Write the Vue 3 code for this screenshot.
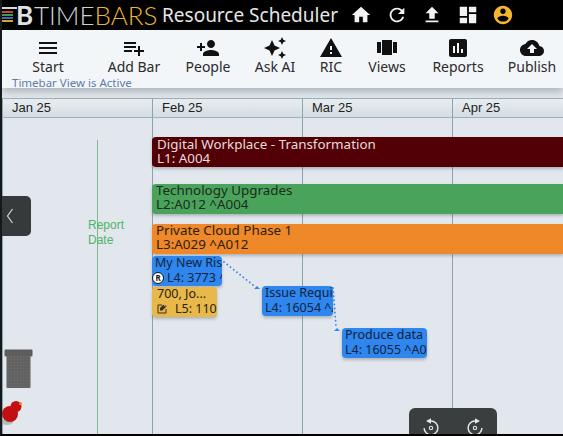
<script setup>
const icons = [
  { label: 'Start', w: 92, d: 'M3 18h18v-2H3v2zm0-5h18v-2H3v2zm0-7v2h18V6H3z' },
  { label: 'Add Bar', w: 80, d: 'M14 10H2v2h12v-2zm0-4H2v2h12V6zm4 8v-4h-2v4h-4v2h4v4h2v-4h4v-2h-4zM2 16h8v-2H2v2z' },
  { label: 'People', w: 68, d: 'M15 12c2.21 0 4-1.79 4-4s-1.79-4-4-4-4 1.79-4 4 1.79 4 4 4zm-9-2V7H4v3H1v2h3v3h2v-3h3v-2H6zm9 4c-2.67 0-8 1.34-8 4v2h16v-2c0-2.66-5.33-4-8-4z' },
  { label: 'Ask AI', w: 66, d: 'M19 9l1.25-2.75L23 5l-2.75-1.25L19 1l-1.25 2.75L15 5l2.75 1.25L19 9zm-7.5.5L9 4 6.5 9.5 1 12l5.5 2.5L9 20l2.5-5.5L17 12l-5.5-2.5zM19 15l-1.25 2.75L15 19l2.75 1.25L19 23l1.25-2.75L23 19l-2.75-1.25L19 15z' },
  { label: 'RIC', w: 46, d: 'M1 21h22L12 2 1 21zm12-3h-2v-2h2v2zm0-4h-2v-4h2v4z' },
  { label: 'Views', w: 66, d: 'M7 19h10V4H7v15zm-5-2h4V6H2v11zM18 6v11h4V6h-4z' },
  { label: 'Reports', w: 76, d: 'M19 3H5c-1.1 0-2 .9-2 2v14c0 1.1.9 2 2 2h14c1.1 0 2-.9 2-2V5c0-1.1-.9-2-2-2zM9 17H7v-7h2v7zm4 0h-2V7h2v10zm4 0h-2v-4h2v4z' },
  { label: 'Publish', w: 72, d: 'M19.35 10.04C18.67 6.59 15.64 4 12 4 9.11 4 6.6 5.64 5.35 8.04 2.34 8.36 0 10.91 0 14c0 3.31 2.69 6 6 6h13c2.76 0 5-2.24 5-5 0-2.64-2.05-4.78-4.65-4.96zM14 13v4h-4v-4H7l5-5 5 5h-3z' },
]
const topIcons = [
  { d: 'M10 20v-6h4v6h5v-8h3L12 3 2 12h3v8z', c: '#f2f2f2' },
  { d: 'M17.65 6.35C16.2 4.9 14.21 4 12 4c-4.42 0-7.99 3.58-7.99 8s3.57 8 7.99 8c3.73 0 6.84-2.55 7.73-6h-2.08c-.82 2.33-3.04 4-5.65 4-3.31 0-6-2.69-6-6s2.69-6 6-6c1.66 0 3.14.69 4.22 1.78L13 11h7V4l-2.35 2.35z', c: '#f2f2f2' },
  { d: 'M9 16h6v-6h4l-7-7-7 7h4zm-4 2h14v2H5z', c: '#f2f2f2' },
  { d: 'M3 13h8V3H3v10zm0 8h8v-6H3v6zm10 0h8V11h-8v10zm0-18v6h8V3h-8z', c: '#f2f2f2' },
  { d: 'M12 2C6.48 2 2 6.48 2 12s4.48 10 10 10 10-4.48 10-10S17.52 2 12 2zm0 3c1.66 0 3 1.34 3 3s-1.34 3-3 3-3-1.34-3-3 1.34-3 3-3zm0 14.2c-2.5 0-4.71-1.28-6-3.22.03-1.99 4-3.08 6-3.08 1.99 0 5.97 1.09 6 3.08-1.29 1.94-3.5 3.22-6 3.22z', c: '#f5b52e' },
]
const months = ['Jan 25', 'Feb 25', 'Mar 25', 'Apr 25']
</script>

<template>
  <div class="app">
    <header class="top">
      <div class="logo">
        <svg class="mark" viewBox="0 0 16 17" width="16" height="17">
          <rect x="0" y="0" width="15" height="2" fill="#d5d9dc" />
          <rect x="0" y="4" width="11" height="2" fill="#c8452e" />
          <rect x="0" y="7" width="11" height="2" fill="#3f9a4a" />
          <rect x="0" y="10" width="11" height="2" fill="#2f6fc2" />
          <rect x="0" y="13" width="11" height="2" fill="#d8a02a" />
        </svg>
        <span class="tb">B</span>
        <span class="time">TIME</span><span class="bars">BARS</span>
      </div>
      <div class="title">Resource Scheduler</div>
      <div class="top-icons">
        <svg v-for="t in topIcons" :key="t.d" viewBox="0 0 24 24" width="22" height="22"><path :d="t.d" :fill="t.c" /></svg>
      </div>
    </header>

    <nav class="toolbar">
      <div class="tools">
        <div v-for="i in icons" :key="i.label" class="tool" :style="{ width: i.w + 'px' }">
          <svg viewBox="0 0 24 24" width="24" height="24"><path :d="i.d" fill="#111" /></svg>
          <span>{{ i.label }}</span>
        </div>
      </div>
      <div class="status">Timebar View is Active</div>
    </nav>

    <div class="months">
      <div v-for="m in months" :key="m" class="month">{{ m }}</div>
    </div>

    <main class="canvas">
      <div class="grid">
        <div class="col"></div><div class="col"></div><div class="col"></div><div class="col"></div>
      </div>

      <div class="report-line"></div>
      <div class="report">Report<br>Date</div>

      <div class="bar wide maroon" style="top:19px"><b>Digital Workplace - Transformation</b><b>L1: A004</b></div>
      <div class="bar wide green" style="top:66px"><b>Technology Upgrades</b><b>L2:A012 ^A004</b></div>
      <div class="bar wide orange" style="top:106px"><b>Private Cloud Phase 1</b><b>L3:A029 ^A012</b></div>

      <div class="bar small blue" style="left:152px;top:138px;width:70px">
        <b>My New Risk</b>
        <b class="withicon"><span class="rbadge">R</span>L4: 3773 ^A0</b>
      </div>
      <div class="bar small yellow" style="left:152px;top:169px;width:65px">
        <b class="indent">700, Jo...</b>
        <b class="withicon">
          <svg viewBox="0 0 24 24" width="12" height="12" class="edit"><path d="M19 19H5V5h7V3H5a2 2 0 0 0-2 2v14a2 2 0 0 0 2 2h14a2 2 0 0 0 2-2v-7h-2v7zM14.6 3.600 8 10.200V15h4.800l6.600-6.600-4.800-4.800zM21.400 6.400l-2-2-1.400 1.400 2 2z" fill="#3a3020"/></svg>
          <span class="gap">L5: 1100</span>
        </b>
      </div>
      <div class="bar small blue" style="left:262px;top:168px;width:71px"><b>Issue Requirem</b><b>L4: 16054 ^A0</b></div>
      <div class="bar small blue" style="left:342px;top:210px;width:85px"><b>Produce data c</b><b>L4: 16055 ^A0</b></div>

      <svg class="links" width="563" height="316" viewBox="0 0 563 316">
        <path d="M224 144 L253 167" stroke="#2f86ee" stroke-width="1.800" stroke-dasharray="0.100 4" fill="none" stroke-linecap="round" />
        <path d="M254 171h6l-3-3z" fill="#2f86ee" />
        <path d="M333 170 L336 208" stroke="#2f86ee" stroke-width="1.800" stroke-dasharray="0.100 4" fill="none" stroke-linecap="round" />
        <path d="M334 213h6l-3-3z" fill="#2f86ee" />
      </svg>

      <button class="side-tab" aria-label="Collapse">
        <svg viewBox="0 0 10 18" width="10" height="18"><path d="M7.500 2 L2.500 9 L7.500 16" fill="none" stroke="#dfe3e5" stroke-width="1.100" /></svg>
      </button>

      <svg class="trash" viewBox="0 0 30 40" width="30" height="40">
        <defs>
          <pattern id="trashdots" width="3" height="3" patternUnits="userSpaceOnUse">
            <rect width="3" height="3" fill="#626262" />
            <rect x="1" y="1" width="1" height="1" fill="#707070" />
          </pattern>
        </defs>
        <rect x="0.500" y="0.500" width="28" height="7" rx="1" fill="#5d5d5d" />
        <rect x="2.500" y="7" width="24" height="32" rx="1" fill="url(#trashdots)" />
      </svg>
      <svg class="pin" viewBox="0 0 24 30" width="24" height="30">
        <ellipse cx="6" cy="25" rx="6" ry="3" fill="#8f959a" opacity=".55" />
        <circle cx="9" cy="17" r="8" fill="#c20f14" />
        <circle cx="15" cy="9.500" r="5.500" fill="#c20f14" />
        <rect x="8" y="10" width="8" height="6" fill="#c20f14" />
        <circle cx="19.500" cy="6.500" r="1.500" fill="#e88a2a" />
      </svg>

      <div class="history">
        <svg viewBox="0 0 24 24" width="22" height="22">
          <path d="M12 5.500A7.500 7.500 0 1 1 4.500 13" fill="none" stroke="#e4e6e7" stroke-width="1.600" />
          <path d="M12 2.500 6.500 5.500 12 8.500z" fill="#e4e6e7" />
          <circle cx="12" cy="13" r="1.800" fill="none" stroke="#e4e6e7" stroke-width="1.200" />
        </svg>
        <svg viewBox="0 0 24 24" width="22" height="22">
          <path d="M12 5.500A7.500 7.500 0 1 0 19.500 13" fill="none" stroke="#e4e6e7" stroke-width="1.600" />
          <path d="M12 2.500 17.500 5.500 12 8.500z" fill="#e4e6e7" />
          <circle cx="12" cy="13" r="1.800" fill="none" stroke="#e4e6e7" stroke-width="1.200" />
        </svg>
      </div>
    </main>
  </div>
</template>

<style scoped>
.app {
  width: 563px;
  height: 436px;
  box-sizing: border-box;
  border-left: 2px solid #15191c;
  border-bottom: 2px solid #000;
  display: flex;
  flex-direction: column;
  overflow: hidden;
  background: #e1e7ec;
  font-family: "Noto Sans", sans-serif;
}
.top {
  height: 30px;
  margin-left: -2px;
  flex: none;
  background: #000;
  display: flex;
  align-items: center;
  overflow: hidden;
}
.logo {
  display: flex;
  align-items: center;
  width: 162px;
  flex: none;
  font-family: "Lato", sans-serif;
  font-size: 26px;
  line-height: 30px;
}
.mark { margin-left: 2px; flex: none; margin-top: 1px; }
.tb {
  color: #dfe3e6;
  font-weight: 700;
  width: 18px;
  margin-left: -2px;
  flex: none;
}
.time { color: #cfd3d6; font-weight: 300; }
.bars { color: #ecb52f; font-weight: 300; }
.title {
  color: #e6e6e6;
  font-size: 19px;
  white-space: nowrap;
  width: 188px;
  flex: none;
}
.top-icons {
  display: flex;
  gap: 13.500px;
}
.toolbar {
  height: 58px;
  flex: none;
  background: #f3f6f9;
  box-shadow: 0 3px 8px rgba(60, 70, 80, .35);
  position: relative;
  z-index: 2;
}
.tools { display: flex; padding-top: 6px; }
.tool {
  flex: none;
  display: flex;
  flex-direction: column;
  align-items: center;
  font-size: 14px;
  line-height: 18px;
  color: #2a2a2a;
  white-space: nowrap;
}
.tool svg { margin-bottom: -2px; }
.status {
  font-size: 11.500px;
  line-height: 13px;
  color: #5d7ca8;
  padding-left: 10px;
}
.months {
  margin-top: 10px;
  height: 20px;
  flex: none;
  display: flex;
  border-top: 1px solid #9fb0b8;
  border-bottom: 1px solid #9fb0b8;
  background: linear-gradient(#e8edf0, #d5dde2);
  box-sizing: border-box;
  font-family: "Liberation Sans", sans-serif;
  font-size: 13px;
  color: #222;
}
.month {
  width: 150px;
  flex: none;
  box-sizing: border-box;
  border-left: 1px solid #8ba3ad;
  padding-left: 9px;
  line-height: 18px;
}
.canvas {
  position: relative;
  flex: 1;
  margin-left: -2px;
}
.grid {
  position: absolute;
  inset: 0 0 0 2px;
  display: flex;
}
.col {
  width: 150px;
  flex: none;
  box-sizing: border-box;
  border-left: 1px solid #8ba3ad;
}
.report-line {
  position: absolute;
  left: 97px;
  top: 22px;
  bottom: 0;
  width: 1px;
  background: #7fb98c;
}
.report {
  position: absolute;
  left: 88px;
  top: 100px;
  font-family: "Liberation Sans", sans-serif;
  font-size: 12px;
  line-height: 15px;
  color: #4fb565;
}
.bar {
  position: absolute;
  box-sizing: border-box;
  overflow: hidden;
  height: 30px;
  display: flex;
  flex-direction: column;
  white-space: nowrap;
  box-shadow: 0 2px 3px rgba(60, 70, 80, .3);
}
.bar b { font-weight: 400; display: block; }
.wide {
  left: 152px;
  right: 0;
  border-radius: 4px 0 0 4px;
  padding-left: 4px;
  font-size: 13.400px;
  line-height: 14px;
}
.wide.green, .wide.orange { justify-content: flex-start; }
.wide.green b:first-child, .wide.orange b:first-child { margin-top: -1px; }
.wide.maroon { padding-left: 5px; }
.small {
  border-radius: 4px;
  padding-left: 3px;
  font-size: 12.500px;
  line-height: 14.500px;
}
.maroon { background: #520005; color: #e8dcdc; }
.green { background: #4aa35a; color: #1d2b20; }
.orange { background: #ee8829; color: #2b2010; }
.blue { background: #2f86ee; color: #10243c; }
.yellow { background: #e8b84a; color: #2a2210; }
.withicon { display: flex !important; align-items: center; }
.indent { padding-left: 2px; }
.rbadge {
  width: 10px;
  height: 10px;
  flex: none;
  border-radius: 50%;
  background: #fff;
  border: 1px solid #111;
  color: #111;
  font-size: 8px;
  line-height: 10px;
  text-align: center;
  margin-right: 3px;
  margin-left: -3px;
  font-weight: 700;
}
.edit { margin-left: 1px; flex: none; }
.gap { margin-left: 7px; }
.links {
  position: absolute;
  left: 0;
  top: 0;
  pointer-events: none;
}
.side-tab {
  position: absolute;
  left: 0;
  top: 78px;
  width: 31px;
  height: 40px;
  padding: 0 0 0 2px;
  border: 0;
  border-radius: 0 5px 5px 0;
  background: #363a3a;
  display: flex;
  align-items: center;
  justify-content: flex-start;
  box-sizing: border-box;
}
.side-tab svg { margin-left: 3px; }
.trash {
  position: absolute;
  left: 4px;
  top: 231px;
}
.pin {
  position: absolute;
  left: 1px;
  top: 279px;
}
.history {
  position: absolute;
  left: 409px;
  top: 290px;
  width: 88px;
  height: 30px;
  border-radius: 6px 6px 0 0;
  background: #3a3e3e;
  display: flex;
  align-items: flex-start;
  justify-content: center;
  gap: 22px;
  padding-top: 8px;
  box-sizing: border-box;
}
</style>
